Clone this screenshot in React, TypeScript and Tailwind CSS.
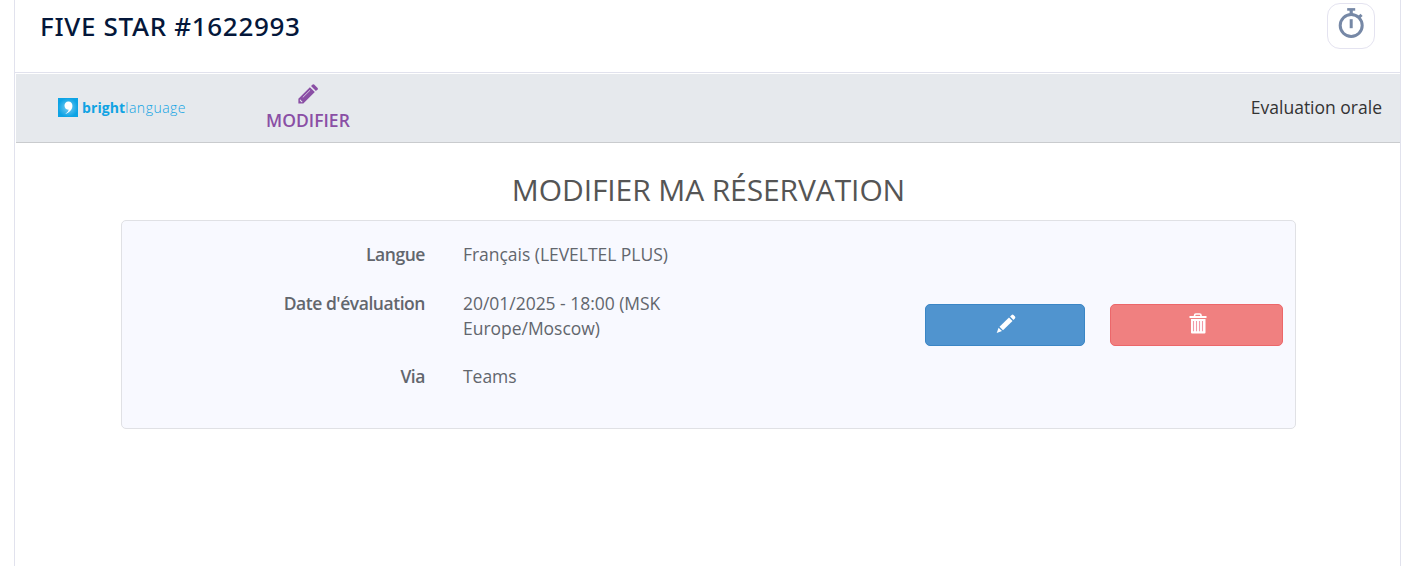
import React from "react";

function Stopwatch() {
  return (
    <svg width="28" height="32" viewBox="0 0 28 32" fill="none" stroke="#7688a6">
      <circle cx="14.2" cy="18.5" r="11" strokeWidth="3" />
      <path d="M10.2 2.4h8" strokeWidth="2.6" />
      <path d="M14.2 3v5" strokeWidth="3.2" />
      <path d="M14.2 12.2v9" strokeWidth="3" />
      <path d="M21.8 10.4l2.8-2.5" strokeWidth="3" />
    </svg>
  );
}

function NavPencil() {
  return (
    <svg width="20" height="20" viewBox="0 0 20 20" fill="#8a4fa5">
      <path d="M11.9 3.2L16.8 8.1L5.3 19.4H.4V14.7Z" />
      <path d="M13 2.1L14.7.5Q15.4 0 16.1.5L19.6 4Q20.1 4.7 19.6 5.4L17.9 7Z" />
      <path d="M12.1 6.2L4.8 13.4" stroke="#d9cfe3" strokeWidth="0.9" />
      <path d="M2 15.2L4.7 17.9L3.4 18.2L1.8 16.6Z" fill="#e6e9ed" />
    </svg>
  );
}

function ButtonPencil() {
  return (
    <svg width="20" height="20" viewBox="0 0 20 20" fill="#fff">
      <path d="M13 3.5L16.5 7L7 16.3L3.5 12.8Z" />
      <path d="M14.1 2.4L15.7.9Q16.6.2 17.5 1L19 2.5Q19.8 3.4 19 4.3L17.5 5.9Z" />
      <path d="M2.6 13.7L6 17.1L.7 19Z" />
    </svg>
  );
}

function Trash() {
  return (
    <svg width="18" height="21" viewBox="0 0 18 21">
      <path d="M5.6 3.5V2.2Q5.6 1 6.8 1h3.9Q12 1 12 2.2v1.3" fill="none" stroke="#fff" strokeWidth="1.6" />
      <path d="M.5 3h17v2H.5zM2 6h14.5v13.5q0 1-1 1H3q-1 0-1-1z" fill="#fff" />
      <path d="M4.5 8v10.3M7.5 8v10.3M10.5 8v10.3M13.5 8v10.3" stroke="#f29aa7" strokeWidth="1.1" />
    </svg>
  );
}

function Logo() {
  return (
    <div className="flex items-center text-[#11a3e3]">
      <svg width="20" height="19" viewBox="0 0 20 19">
        <defs>
          <radialGradient id="glow">
            <stop offset="0" stopColor="#79ccf2" />
            <stop offset="1" stopColor="#0da3e5" />
          </radialGradient>
        </defs>
        <path d="M0 0h20v19H0z" fill="url(#glow)" />
        <path d="M10.4 3.4c2.5 0 4 1.8 4 4.4 0 3.8-3 7-7.2 8.2 2.2-1.6 3.4-3 3.5-4.4-2.4.3-4.2-1.5-4.2-4 0-2.4 1.6-4.2 3.9-4.2z" fill="#fff" />
      </svg>
      <div className="ml-[4px] flex whitespace-nowrap font-['Open_Sans'] text-[14px] leading-5">
        <span className="font-bold tracking-[0.1px]">bright</span>
        <span className="font-light tracking-[0.5px]">language</span>
      </div>
    </div>
  );
}

function Row({ label, children }: { label: string; children: React.ReactNode }) {
  return (
    <div className="flex gap-[38px]">
      <dt className="w-[291px] text-right font-semibold tracking-[-0.45px]">{label}</dt>
      <dd className="w-[230px] tracking-[-0.03px]">{children}</dd>
    </div>
  );
}

export default function App() {
  return (
    <div className="h-[566px] overflow-hidden bg-white pl-[14px] font-['Open_Sans',sans-serif]">
      <div className="h-full w-[1387px] border-x border-[#e1e2ed]">
        <header className="flex h-[73px] items-start justify-between border-b border-[#e1e2ed] pr-[25px] pl-[25px]">
          <h1 className="mt-[8px] font-['Noto_Sans'] text-[26px] leading-9 font-medium tracking-[0.68px] text-[#04173a]">FIVE STAR #1622993</h1>
          <button className="mt-[3px] flex h-[46px] w-12 items-start justify-center rounded-[13px] border border-[#e4e3f0] pt-[3px]" aria-label="Minuteur">
            <Stopwatch />
          </button>
        </header>
        <nav className="mt-px ml-px flex h-[69px] items-center border-b border-[#c9cbce] bg-[#e6e9ed] pl-[42px]">
          <div className="w-[208px] pb-px">
            <Logo />
          </div>
          <a className="flex flex-col items-center pt-[1px] text-[17.5px] leading-[25px] font-semibold text-[#8a4fa5]">
            <NavPencil />
            <span className="mt-[4px] tracking-[0.02px]">MODIFIER</span>
          </a>
          <span className="mr-[18px] ml-auto pb-[2px] text-[17.5px] leading-[25px] text-[#333]">Evaluation orale</span>
        </nav>
        <main className="pl-[106px]">
          <h2 className="mt-[26px] w-[1175px] text-center text-[30px] leading-[42px] tracking-[-0.1px] text-[#555]">MODIFIER MA RÉSERVATION</h2>
          <section className="mt-[9px] flex h-[209px] w-[1175px] items-start rounded-[5px] border border-[#e0e1e5] bg-[#f8f9ff] pl-3 text-[17.5px] leading-[25px] text-[#62666d]">
            <dl className="mt-[21px] flex w-[791px] flex-col gap-[23.7px]">
              <Row label="Langue">Français (LEVELTEL PLUS)</Row>
              <Row label="Date d'évaluation">20/01/2025 - 18:00 (MSK Europe/Moscow)</Row>
              <Row label="Via">Teams</Row>
            </dl>
            <div className="mt-[83px] flex gap-[25px]">
              <button className="flex h-[42px] w-[160px] items-start justify-center rounded-[5px] border border-[#3b86c5] bg-[#5094cf] pt-[9px] pl-px" aria-label="Modifier">
                <ButtonPencil />
              </button>
              <button className="flex h-[42px] w-[173px] items-start justify-center rounded-[5px] border border-[#ec676a] bg-[#f08080] pt-[8px] pl-[2px]" aria-label="Supprimer">
                <Trash />
              </button>
            </div>
          </section>
        </main>
      </div>
    </div>
  );
}
